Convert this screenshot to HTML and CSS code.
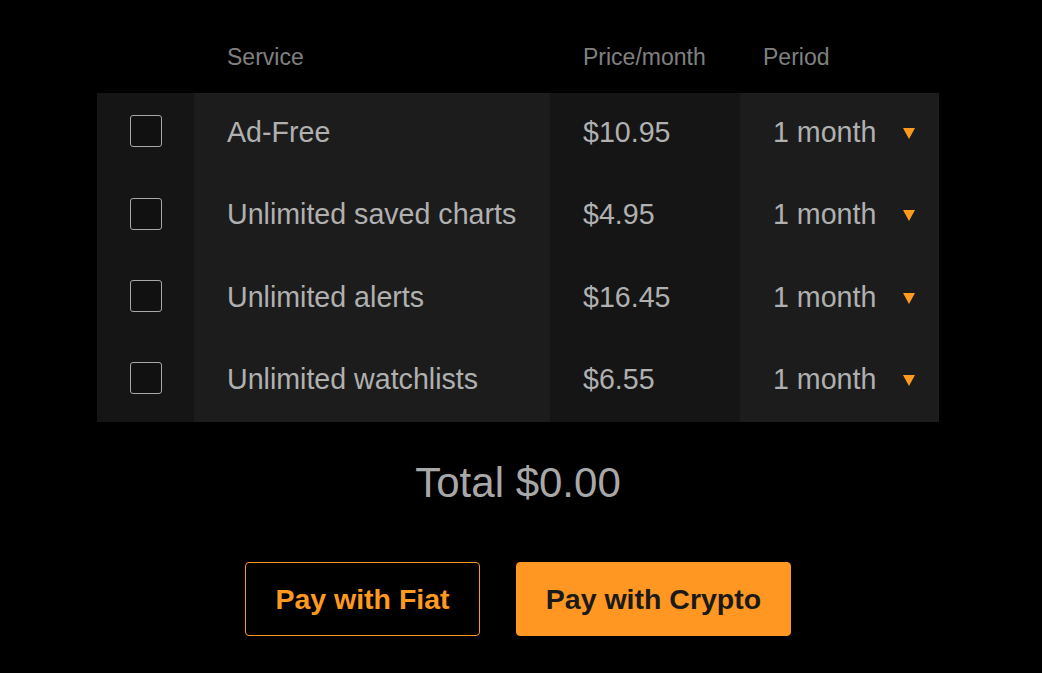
FILE: index.html
```html
<!DOCTYPE html>
<html>
<head>
<meta charset="utf-8">
<link rel="stylesheet" href="styles.css">
</head>
<body>
<div class="page">
  <table class="services">
    <thead>
      <tr>
        <th class="c-check"></th>
        <th class="c-service">Service</th>
        <th class="c-price">Price/month</th>
        <th class="c-period">Period</th>
      </tr>
    </thead>
    <tbody>
      <tr>
        <td class="c-check"><span class="box"></span></td>
        <td class="c-service">Ad-Free</td>
        <td class="c-price">$10.95</td>
        <td class="c-period"><div class="select"><span>1 month</span><span class="arrow"></span></div></td>
      </tr>
      <tr>
        <td class="c-check"><span class="box"></span></td>
        <td class="c-service">Unlimited saved charts</td>
        <td class="c-price">$4.95</td>
        <td class="c-period"><div class="select"><span>1 month</span><span class="arrow"></span></div></td>
      </tr>
      <tr>
        <td class="c-check"><span class="box"></span></td>
        <td class="c-service">Unlimited alerts</td>
        <td class="c-price">$16.45</td>
        <td class="c-period"><div class="select"><span>1 month</span><span class="arrow"></span></div></td>
      </tr>
      <tr>
        <td class="c-check"><span class="box"></span></td>
        <td class="c-service">Unlimited watchlists</td>
        <td class="c-price">$6.55</td>
        <td class="c-period"><div class="select"><span>1 month</span><span class="arrow"></span></div></td>
      </tr>
    </tbody>
  </table>
  <div class="total">Total $0.00</div>
  <div class="actions">
    <button class="btn btn-outline">Pay with Fiat</button>
    <button class="btn btn-solid">Pay with Crypto</button>
  </div>
</div>
</body>
</html>
```
FILE: styles.css
```css
html, body {
  margin: 0;
  padding: 0;
  background: #000;
}
body {
  font-family: "Liberation Sans", Arial, Helvetica, sans-serif;
  color: #b0b0b0;
}
.page {
  width: 842px;
  margin: 0 0 0 97px;
  padding-top: 40px;
  display: flex;
  flex-direction: column;
  align-items: center;
}
.services {
  width: 842px;
  border-collapse: collapse;
  border-spacing: 0;
  table-layout: fixed;
}
.services th,
.services td {
  box-sizing: border-box;
}
.services th {
  font-weight: normal;
  font-size: 23px;
  color: #808080;
  text-align: left;
  height: 53px;
  line-height: 34px;
  padding: 0 0 19px 33px;
  vertical-align: middle;
}
.services th.c-check { padding-left: 0; }
.services th.c-period { padding-left: 23px; }
.services td {
  font-size: 28.6px;
  height: 82.25px;
  padding: 0 0 3px 33px;
  vertical-align: middle;
}
.c-check { width: 97px; }
.c-service { width: 356px; }
.c-price { width: 190px; }
.c-period { width: 199px; }
.services td.c-check {
  background: #151515;
  padding: 0 0 8px 0;
  text-align: center;
}
td.c-service { background: #1c1c1c; }
td.c-price { background: #151515; }
.services td.c-period { background: #1c1c1c; padding-right: 24px; }
.box {
  display: inline-block;
  width: 32px;
  height: 32px;
  box-sizing: border-box;
  border: 1px solid #a8a8a8;
  border-radius: 3px;
  background: #111;
  vertical-align: middle;
}
.select {
  display: flex;
  align-items: center;
  justify-content: space-between;
}
.arrow {
  width: 0;
  height: 0;
  border-left: 6px solid transparent;
  border-right: 6px solid transparent;
  border-top: 11px solid #ff9a1f;
  margin-top: 2px;
}
.total {
  margin-top: 36px;
  font-size: 42px;
  line-height: 50px;
  color: #a8a8a8;
}
.actions {
  margin-top: 54px;
  display: flex;
  gap: 36px;
}
.btn {
  height: 74px;
  border-radius: 4px;
  font-family: "Liberation Sans", Arial, Helvetica, sans-serif;
  font-weight: bold;
  font-size: 28.5px;
  padding: 0;
  text-align: center;
  cursor: pointer;
}
.btn-outline {
  width: 235px;
  background: #000;
  border: 1px solid #ff9a1f;
  color: #ff9a1f;
}
.btn-solid {
  width: 275px;
  background: #ff9722;
  border: 1px solid #ff9722;
  color: #1a1a1a;
}
```
